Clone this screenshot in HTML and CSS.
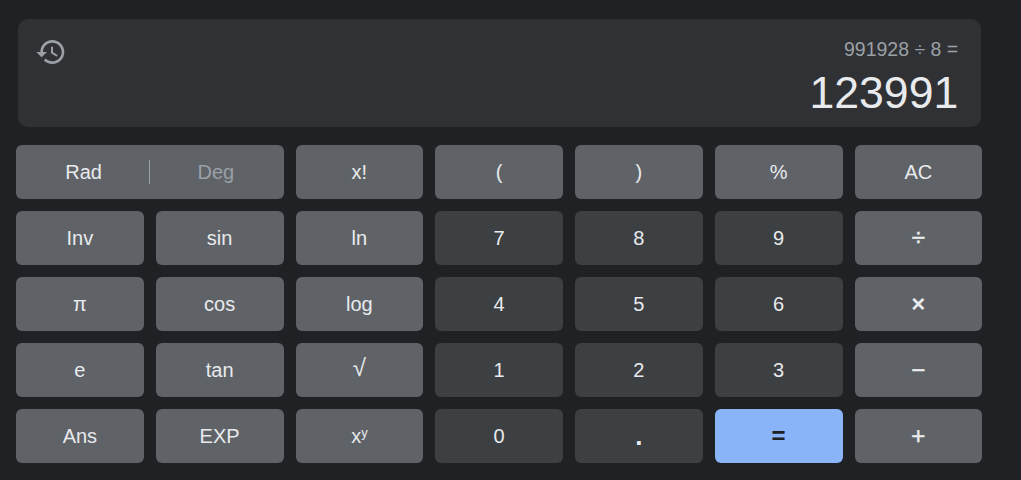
FILE: index.html
```html
<!DOCTYPE html>
<html lang="en">
<head>
<meta charset="utf-8">
<title>Calculator</title>
<link rel="stylesheet" href="styles.css">
</head>
<body>
<main class="calc">
  <section class="display">
    <svg class="history" viewBox="0 0 24 24" aria-hidden="true"><path d="M13 3c-4.97 0-9 4.03-9 9H1l3.89 3.89.07.14L9 12H6c0-3.87 3.13-7 7-7s7 3.13 7 7-3.13 7-7 7c-1.93 0-3.68-.79-4.94-2.06l-1.42 1.42C8.27 19.99 10.51 21 13 21c4.97 0 9-4.03 9-9s-4.03-9-9-9zm-1 5v5l4.28 2.54.72-1.21-3.5-2.08V8H12z"/></svg>
    <div class="readout">
      <div class="expr">991928 ÷ 8 =</div>
      <div class="result">123991</div>
    </div>
  </section>
  <section class="keys">
    <div class="key fn wide"><span class="mode on">Rad</span><span class="mode off">Deg</span></div>
    <div class="key fn">x!</div>
    <div class="key fn">(</div>
    <div class="key fn">)</div>
    <div class="key fn">%</div>
    <div class="key fn">AC</div>

    <div class="key fn">Inv</div>
    <div class="key fn">sin</div>
    <div class="key fn">ln</div>
    <div class="key num">7</div>
    <div class="key num">8</div>
    <div class="key num">9</div>
    <div class="key fn op">÷</div>

    <div class="key fn">π</div>
    <div class="key fn">cos</div>
    <div class="key fn">log</div>
    <div class="key num">4</div>
    <div class="key num">5</div>
    <div class="key num">6</div>
    <div class="key fn op times">×</div>

    <div class="key fn">e</div>
    <div class="key fn">tan</div>
    <div class="key fn root">√</div>
    <div class="key num">1</div>
    <div class="key num">2</div>
    <div class="key num">3</div>
    <div class="key fn op">−</div>

    <div class="key fn">Ans</div>
    <div class="key fn">EXP</div>
    <div class="key fn"><span>x<sup class="sup">y</sup></span></div>
    <div class="key num">0</div>
    <div class="key num dot">.</div>
    <div class="key eq">=</div>
    <div class="key fn op">+</div>
  </section>
</main>
</body>
</html>
```

FILE: styles.css
```css
* {
  box-sizing: border-box;
}

html,
body {
  margin: 0;
  height: 480px;
  overflow: hidden;
  background: #202124;
}

body {
  font-family: "Liberation Sans", Arial, sans-serif;
  color: #e8eaed;
}

.calc {
  display: flex;
  flex-direction: column;
  width: 966.25px;
  margin-left: 16px;
  padding-top: 19px;
  gap: 18px;
}

.display {
  display: flex;
  justify-content: space-between;
  height: 108px;
  margin: 0 1px 0 2px;
  padding: 17px 23px 0 17px;
  background: #303134;
  border-radius: 10px;
}

.history {
  width: 32px;
  height: 32px;
  fill: #9aa0a6;
}

.readout {
  text-align: right;
}

.expr {
  height: 26px;
  font-size: 19.5px;
  line-height: 26px;
  color: #9aa0a6;
}

.result {
  margin-top: 6px;
  font-size: 44.6px;
  line-height: 50px;
  color: #e8eaed;
}

.keys {
  display: grid;
  grid-template-columns: repeat(7, 1fr);
  grid-auto-rows: 54px;
  gap: 12px;
}

.key {
  display: flex;
  align-items: center;
  justify-content: center;
  border-radius: 6px;
  font-size: 20px;
  line-height: 1;
}

.fn {
  background: #5f6368;
}

.num {
  background: #3c4043;
}

.op {
  font-size: 24px;
  -webkit-text-stroke: 0.5px #e8eaed;
}

.times {
  font-weight: 700;
  -webkit-text-stroke: 0;
}

.root {
  padding-bottom: 4px;
  font-size: 24px;
}

.dot {
  background: #3c4043;
  font-size: 26px;
  font-weight: 700;
}

.eq {
  background: #8ab4f8;
  color: #202124;
  font-size: 24px;
  font-weight: 700;
}

.wide {
  grid-column: span 2;
  padding: 15px 0;
}

.mode {
  display: flex;
  flex: 1;
  align-items: center;
  justify-content: center;
  height: 24px;
}

.on {
  padding-left: 2px;
  border-right: 1px solid #9aa0a6;
}

.off {
  padding-right: 2px;
  color: #9aa0a6;
}

.sup {
  font-size: 13px;
  line-height: 0;
  vertical-align: 6px;
}
```
